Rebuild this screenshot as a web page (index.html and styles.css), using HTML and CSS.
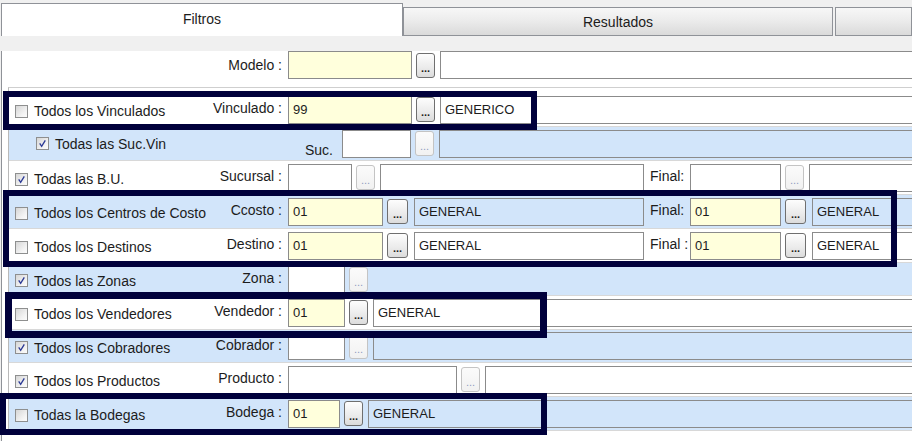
FILE: index.html
```html
<!DOCTYPE html>
<html lang="es">

<head>
    <meta charset="UTF-8">
    <title>Filtros</title>
    <link rel="stylesheet" href="styles.css">
</head>

<body>
    <div class="window">
        <div class="tabs">
            <div class="tab tab--active">Filtros</div>
            <div class="tab tab--results">Resultados</div>
            <div class="tab tab--rest"></div>
        </div>

        <div class="sheet">
            <div class="model">
                <span class="model__label">Modelo :</span>
                <span class="box box--req box--w124"></span>
                <span class="dots">...</span>
                <span class="box box--fill"></span>
            </div>

            <div class="grid">
                <!-- vinculado -->
                <div class="row">
                    <div class="row__lead">
                        <span class="opt"><span class="check"></span>Todos los Vinculados</span>
                        <span class="row__field">Vinculado :</span>
                    </div>
                    <span class="box box--req box--w124">99</span>
                    <span class="dots">...</span>
                    <span class="box box--fill">GENERICO</span>
                </div>

                <div class="row row--alt">
                    <div class="row__lead row__lead--wide">
                        <span class="opt opt--sub"><span class="check check--on"><svg viewBox="0 0 13 13"><path d="M3.2 6.4l2.3 3.4 4.3-7"/></svg></span>Todas las Suc.Vin</span>
                        <span class="row__field row__field--low">Suc.</span>
                    </div>
                    <span class="box box--w69"></span>
                    <span class="dots dots--off">...</span>
                    <span class="box box--fill box--desc"></span>
                </div>

                <div class="row">
                    <div class="row__lead">
                        <span class="opt"><span class="check check--on"><svg viewBox="0 0 13 13"><path d="M3.2 6.4l2.3 3.4 4.3-7"/></svg></span>Todas las B.U.</span>
                        <span class="row__field">Sucursal :</span>
                    </div>
                    <span class="box box--w64"></span>
                    <span class="dots dots--off">...</span>
                    <span class="box box--w264"></span>
                    <span class="final">Final:</span>
                    <span class="box box--w91"></span>
                    <span class="dots dots--off">...</span>
                    <span class="box box--fill"></span>
                </div>

                <div class="row row--alt">
                    <div class="row__lead">
                        <span class="opt"><span class="check"></span>Todos los Centros de Costo</span>
                        <span class="row__field">Ccosto :</span>
                    </div>
                    <span class="box box--req box--w95">01</span>
                    <span class="dots dots--lg">...</span>
                    <span class="box box--desc box--w230">GENERAL</span>
                    <span class="final">Final:</span>
                    <span class="box box--req box--w91">01</span>
                    <span class="dots dots--lg">...</span>
                    <span class="box box--fill box--desc">GENERAL</span>
                </div>

                <div class="row">
                    <div class="row__lead">
                        <span class="opt"><span class="check"></span>Todos los Destinos</span>
                        <span class="row__field">Destino :</span>
                    </div>
                    <span class="box box--req box--w95">01</span>
                    <span class="dots dots--lg">...</span>
                    <span class="box box--w230">GENERAL</span>
                    <span class="final">Final :</span>
                    <span class="box box--req box--w91">01</span>
                    <span class="dots dots--lg">...</span>
                    <span class="box box--fill">GENERAL</span>
                </div>

                <div class="row row--alt row--short">
                    <div class="row__lead">
                        <span class="opt"><span class="check check--on"><svg viewBox="0 0 13 13"><path d="M3.2 6.4l2.3 3.4 4.3-7"/></svg></span>Todos las Zonas</span>
                        <span class="row__field">Zona :</span>
                    </div>
                    <span class="box box--w57"></span>
                    <span class="dots dots--off">...</span>
                </div>

                <div class="row">
                    <div class="row__lead">
                        <span class="opt"><span class="check"></span>Todos los Vendedores</span>
                        <span class="row__field">Vendedor :</span>
                    </div>
                    <span class="box box--req box--w57">01</span>
                    <span class="dots">...</span>
                    <span class="box box--fill">GENERAL</span>
                </div>

                <div class="row row--alt row--short">
                    <div class="row__lead">
                        <span class="opt"><span class="check check--on"><svg viewBox="0 0 13 13"><path d="M3.2 6.4l2.3 3.4 4.3-7"/></svg></span>Todos los Cobradores</span>
                        <span class="row__field">Cobrador :</span>
                    </div>
                    <span class="box box--w57"></span>
                    <span class="dots dots--off">...</span>
                    <span class="box box--fill box--desc"></span>
                </div>

                <div class="row">
                    <div class="row__lead">
                        <span class="opt"><span class="check check--on"><svg viewBox="0 0 13 13"><path d="M3.2 6.4l2.3 3.4 4.3-7"/></svg></span>Todos los Productos</span>
                        <span class="row__field">Producto :</span>
                    </div>
                    <span class="box box--w169"></span>
                    <span class="dots dots--off">...</span>
                    <span class="box box--fill"></span>
                </div>

                <div class="row row--alt">
                    <div class="row__lead">
                        <span class="opt"><span class="check"></span>Todas la Bodegas</span>
                        <span class="row__field">Bodega :</span>
                    </div>
                    <span class="box box--req box--w52">01</span>
                    <span class="dots">...</span>
                    <span class="box box--fill box--desc">GENERAL</span>
                </div>
            </div>
        </div>

        <!-- marcos de resaltado sobre los filtros -->
        <div class="mark mark--vinc"></div>
        <div class="mark mark--ccosto"></div>
        <div class="mark mark--vend"></div>
        <div class="mark mark--bod"></div>
    </div>
</body>

</html>
```

FILE: styles.css
```css
* {
    margin: 0;
    padding: 0;
    box-sizing: border-box;
}

body {
    font-family: "Liberation Sans", Arial, sans-serif;
    font-size: 14px;
    color: #1c1c1c;
    background: #f0f0f0;
    overflow: hidden;
}

.window {
    position: relative;
    height: 441px;
}

/* pestañas */
.tabs {
    display: flex;
    align-items: flex-end;
    height: 36px;
    padding-left: 1px;
}

.tab {
    display: flex;
    align-items: center;
    justify-content: center;
    height: 29px;
    border: 1px solid #8f9298;
    background: linear-gradient(#f7f7f7, #ececec 45%, #dadada);
}

.tab--active {
    width: 402px;
    height: 33px;
    padding-bottom: 2px;
    border-bottom: none;
    background: #fff;
}

.tab--results {
    width: 430px;
    margin-right: 2px;
}

.tab--rest {
    flex: 1;
}

.sheet {
    height: 405px;
    margin-left: 1px;
    border-left: 1px solid #8f9298;
    background: #fff;
}

/* modelo */
.model {
    display: flex;
    align-items: center;
    margin-top: 15px;
    height: 28px;
}

.model__label {
    width: 280px;
    margin-right: 6px;
    text-align: right;
}

/* grilla de filtros */
.grid {
    margin: 8px 0 0 6px;
    padding-top: 5px;
    border-top: 1px solid #cfcfcf;
    border-left: 1px solid #b9b9b9;
}

.row {
    display: flex;
    align-items: center;
    height: 34px;
    border-bottom: 1px solid #d8d8d8;
    background: #fff;
}

.row--alt {
    background: #d2e5fa;
}

.row--short {
    height: 33px;
}

.row__lead {
    display: flex;
    align-items: center;
    justify-content: space-between;
    width: 273px;
    height: 100%;
    margin-right: 6px;
    white-space: nowrap;
}

.row__lead--wide {
    width: 324px;
    margin-right: 9px;
}

.row__field {
    padding-bottom: 3px;
}

.row__field--low {
    padding: 12px 0 0;
}

.opt {
    display: flex;
    align-items: center;
    padding: 3px 0 0 6px;
}

.opt--sub {
    padding: 0 0 0 27px;
}

.check {
    display: inline-flex;
    width: 13px;
    height: 13px;
    margin-right: 6px;
    border: 1px solid #8e8f8f;
    background: linear-gradient(135deg, #d6d6d6, #f4f4f4 70%, #fbfbfb);
}

.check svg {
    width: 11px;
    height: 11px;
}

.check path {
    fill: none;
    stroke: #2c3a96;
    stroke-width: 1.6;
}

/* cajas de texto */
.box {
    display: flex;
    align-items: center;
    flex: none;
    height: 28px;
    padding: 0 4px;
    border: 1px solid #8b8b8b;
    background: #fff;
    font-size: 13px;
    white-space: nowrap;
}

.box--req {
    background: #ffffdc;
}

.box--desc {
    background: transparent;
}

.box--fill {
    flex: 1;
    border-right: none;
}

.box--w52 { width: 52px; }
.box--w57 { width: 57px; }
.box--w64 { width: 64px; }
.box--w69 { width: 69px; }
.box--w91 { width: 91px; }
.box--w95 { width: 95px; }
.box--w124 { width: 124px; }
.box--w169 { width: 169px; }
.box--w230 { width: 230px; }
.box--w264 { width: 264px; }

/* botón de búsqueda */
.dots {
    display: flex;
    align-items: flex-end;
    justify-content: center;
    flex: none;
    width: 19px;
    height: 25px;
    margin: 0 5px 0 4px;
    padding-bottom: 3px;
    border: 1px solid #6f6f6f;
    border-radius: 3px;
    background: linear-gradient(#fdfdfd, #ececec 55%, #dcdcdc);
    font-size: 11px;
    font-weight: bold;
    line-height: 1;
    color: #202020;
}

.dots--lg {
    width: 21px;
    margin-right: 6px;
}

.dots--off {
    border-color: #c4c4c4;
    background: linear-gradient(#fbfbfb, #f1f1f1);
    color: #8f9cc0;
    font-weight: normal;
}

.final {
    width: 40px;
    margin-left: 6px;
    padding-bottom: 3px;
    white-space: nowrap;
}

/* marcos de resaltado */
.mark {
    position: absolute;
    border: 6px solid #00003b;
}

.mark--vinc {
    left: 3px;
    top: 91px;
    width: 534px;
    height: 39px;
}

.mark--ccosto {
    left: 3px;
    top: 190px;
    width: 894px;
    height: 77px;
}

.mark--vend {
    left: 5px;
    top: 292px;
    width: 542px;
    height: 46px;
    border-width: 7px;
}

.mark--bod {
    left: 0;
    top: 393px;
    width: 547px;
    height: 42px;
}
```
